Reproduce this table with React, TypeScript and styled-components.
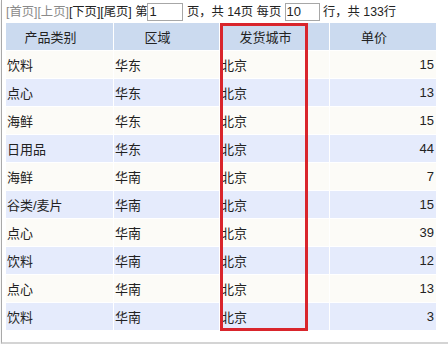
import * as React from "react";
import styled, { createGlobalStyle } from "styled-components";

const GlobalStyle = createGlobalStyle`
  html, body {
    margin: 0;
    padding: 0;
    background: #fff;
  }
  body {
    font-family: "Liberation Sans", "Noto Sans CJK SC", sans-serif;
    font-size: 13px;
    color: #222;
  }
`;

type Row = {
  category: string;
  region: string;
  city: string;
  price: number;
};

const rows: Row[] = [
  { category: "饮料", region: "华东", city: "北京", price: 15 },
  { category: "点心", region: "华东", city: "北京", price: 13 },
  { category: "海鲜", region: "华东", city: "北京", price: 15 },
  { category: "日用品", region: "华东", city: "北京", price: 44 },
  { category: "海鲜", region: "华南", city: "北京", price: 7 },
  { category: "谷类/麦片", region: "华南", city: "北京", price: 15 },
  { category: "点心", region: "华南", city: "北京", price: 39 },
  { category: "饮料", region: "华南", city: "北京", price: 12 },
  { category: "点心", region: "华南", city: "北京", price: 13 },
  { category: "饮料", region: "华南", city: "北京", price: 3 },
];

const Frame = styled.div`
  position: relative;
  margin-left: 1px;
  width: 443px;
  height: 342px;
  border-left: 1px solid #a9a9a9;
  border-right: 1px solid #cfcfcf;
  border-bottom: 2px solid #d4d4d4;
  box-shadow: 0 2px 2px #e6e6e6;
  padding-left: 4px;
  box-sizing: content-box;
`;

const Toolbar = styled.div`
  height: 23px;
  display: flex;
  align-items: center;
  white-space: pre;
  font-size: 12.3px;
  line-height: 18px;
`;

const PageLink = styled.span<{ $disabled?: boolean }>`
  color: ${(p) => (p.$disabled ? "#8a8a8a" : "#222")};
  cursor: ${(p) => (p.$disabled ? "default" : "pointer")};
`;

const PageInput = styled.input<{ $w: number }>`
  width: ${(p) => p.$w}px;
  height: 18px;
  box-sizing: border-box;
  border: 1px solid #a7a7a7;
  padding: 0 1px;
  margin: 0;
  font: inherit;
  font-size: 13px;
  color: #222;
  background: #fff;
  outline: none;
`;

const Table = styled.table`
  border-collapse: separate;
  border-spacing: 0;
  table-layout: fixed;
  width: 430px;
`;

const Col = styled.col<{ $w: number }>`
  width: ${(p) => p.$w}px;
`;

const HeadCell = styled.th`
  height: 27px;
  padding: 0 18px 0 0;
  background: #cbdaef;
  border-right: 1px solid #fff;
  border-bottom: 1px solid #fff;
  font-weight: normal;
  text-align: center;
  white-space: nowrap;
  &:last-child {
    border-right: none;
  }
`;

const BodyRow = styled.tr<{ $alt: boolean }>`
  background: ${(p) => (p.$alt ? "#e5ebfc" : "#fcfbf7")};
`;

const Cell = styled.td<{ $right?: boolean }>`
  height: 27px;
  padding: 0 2px 0 1px;
  border-right: 1px solid #fff;
  border-bottom: 1px solid #fff;
  text-align: ${(p) => (p.$right ? "right" : "left")};
  white-space: nowrap;
  overflow: hidden;
  &:last-child {
    border-right: none;
  }
`;

const Highlight = styled.div`
  position: absolute;
  left: 218px;
  top: 23px;
  width: 82px;
  height: 302px;
  border: 3px solid #d9252c;
  pointer-events: none;
`;

export default function App() {
  return (
    <>
      <GlobalStyle />
      <Frame>
        <Toolbar>
          <PageLink $disabled>[首页]</PageLink>
          <PageLink $disabled>[上页]</PageLink>
          <PageLink>[下页]</PageLink>
          <PageLink>[尾页]</PageLink>
          <span> 第</span>
          <PageInput $w={36} defaultValue="1" />
          <span> 页，共 14页 每页 </span>
          <PageInput $w={35} defaultValue="10" />
          <span> 行，共 133行</span>
        </Toolbar>
        <Table>
          <colgroup>
            <Col $w={108} />
            <Col $w={106} />
            <Col $w={110} />
            <Col $w={106} />
          </colgroup>
          <thead>
            <tr>
              <HeadCell>产品类别</HeadCell>
              <HeadCell>区域</HeadCell>
              <HeadCell>发货城市</HeadCell>
              <HeadCell>单价</HeadCell>
            </tr>
          </thead>
          <tbody>
            {rows.map((r, i) => (
              <BodyRow key={i} $alt={i % 2 === 1}>
                <Cell>{r.category}</Cell>
                <Cell>{r.region}</Cell>
                <Cell>{r.city}</Cell>
                <Cell $right>{r.price}</Cell>
              </BodyRow>
            ))}
          </tbody>
        </Table>
        <Highlight />
      </Frame>
    </>
  );
}
